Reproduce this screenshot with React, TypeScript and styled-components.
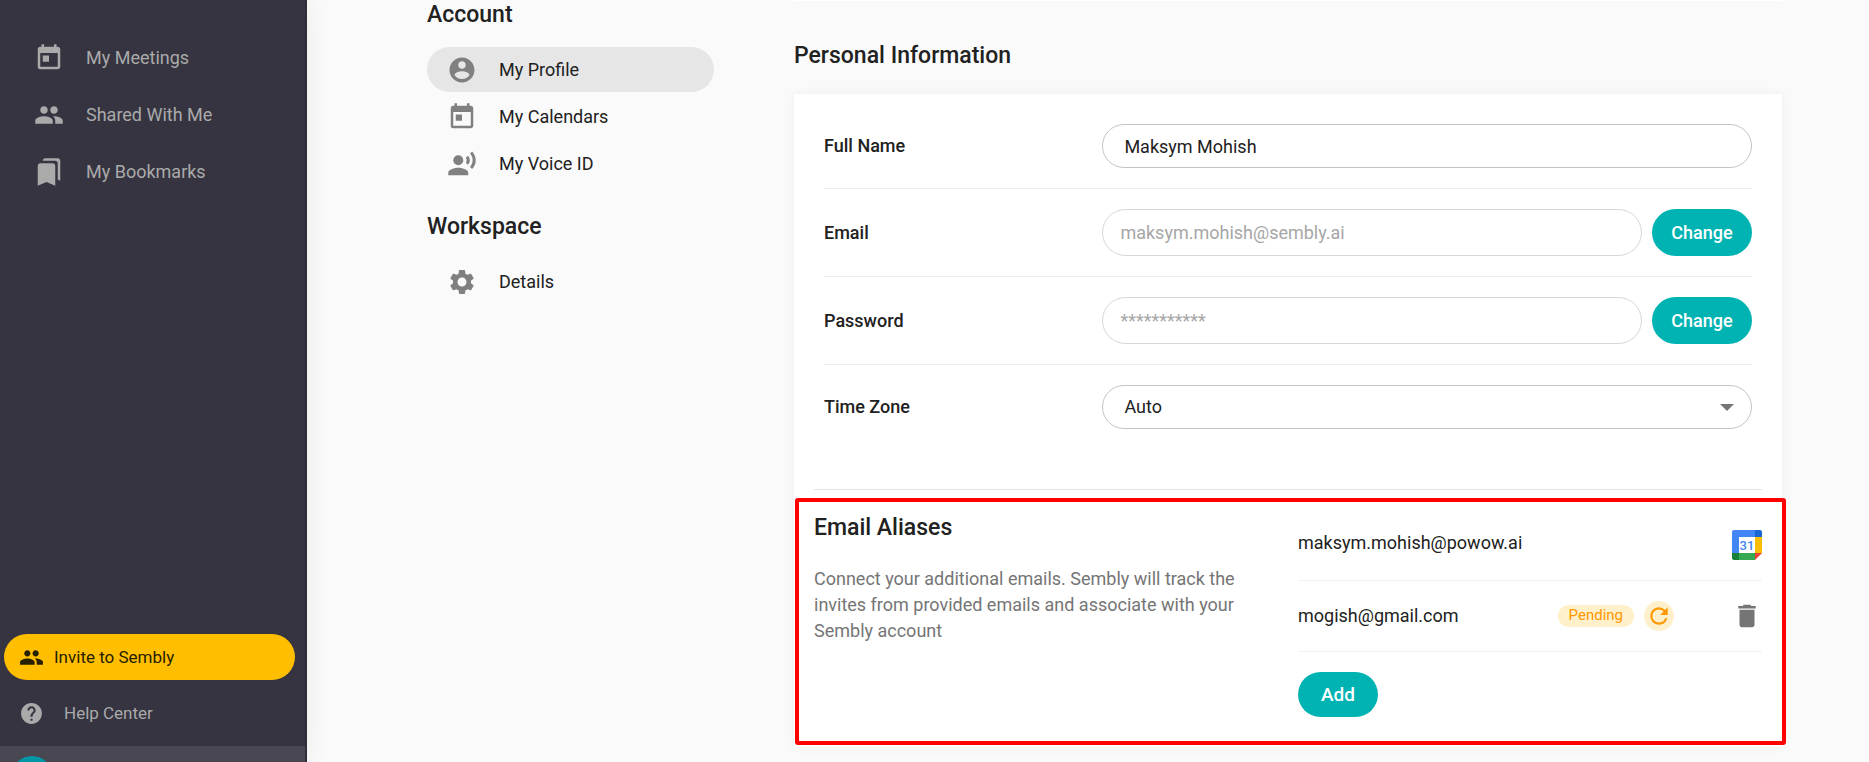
import React from "react";
import styled, { createGlobalStyle, css } from "styled-components";
import {
  MdToday,
  MdPeople,
  MdBookmarks,
  MdRecordVoiceOver,
  MdSettings,
  MdHelp,
  MdRefresh,
  MdDelete,
} from "react-icons/md";

const GlobalStyle = createGlobalStyle`
  *, *::before, *::after { box-sizing: border-box; }
  body {
    margin: 0;
    background: #fafafa;
    color: #212121;
    font-family: Roboto, "Liberation Sans", sans-serif;
    font-size: 18px;
    line-height: 26px;
  }
  h2, p, ul { margin: 0; padding: 0; }
  ul { list-style: none; }
  button, input, select { font: inherit; }
`;

const Page = styled.div`
  display: flex;
  height: 100vh;
  overflow: hidden;
`;

const Sidebar = styled.nav`
  flex: none;
  width: 307px;
  display: flex;
  flex-direction: column;
  background: #353440;
  border-right: 2px solid #2e2d38;
  box-shadow: 0 0 24px rgba(0, 0, 0, 0.07);
`;

const SidebarList = styled.ul`
  flex: 1;
  padding-top: 29px;
`;

const SidebarLink = styled.a`
  display: flex;
  align-items: center;
  gap: 22px;
  height: 57px;
  padding-left: 34px;
  color: #aaaaaa;
  text-decoration: none;
  svg { flex: none; width: 30px; height: 30px; }
`;

const InviteButton = styled.button`
  display: flex;
  align-items: center;
  gap: 10px;
  height: 46px;
  margin: 0 10px 0 4px;
  padding: 0 15px;
  border: 0;
  border-radius: 23px;
  background: #ffbf00;
  color: #262000;
  font-size: 17px;
  svg { width: 25px; height: 25px; }
`;

const HelpLink = styled.a`
  display: flex;
  align-items: center;
  gap: 20px;
  height: 66px;
  padding-left: 19px;
  color: #aaaaaa;
  font-size: 17px;
  text-decoration: none;
  svg { width: 25px; height: 25px; }
`;

const UserBar = styled.div`
  height: 16px;
  padding: 10px 12px 0;
  overflow: hidden;
  background: #494852;
`;

const Avatar = styled.div`
  width: 40px;
  height: 40px;
  border-radius: 50%;
  background: #0097a7;
`;

const Main = styled.div`
  flex: 1;
  min-width: 0;
  display: flex;
  gap: 80px;
  padding: 0 87px 0 120px;
`;

const SettingsNav = styled.nav`
  flex: none;
  width: 287px;
`;

const Heading = styled.h2`
  font-size: 23px;
  font-weight: 500;
  line-height: 30px;
`;

const SettingsList = styled.ul`
  display: flex;
  flex-direction: column;
  gap: 2px;
  padding: 17px 0 26px;
`;

const SettingsLink = styled.a<{ $active?: boolean }>`
  display: flex;
  align-items: center;
  gap: 22px;
  height: 45px;
  padding-left: 20px;
  border-radius: 23px;
  background: ${(p) => (p.$active ? "#e6e6e6" : "transparent")};
  color: #212121;
  text-decoration: none;
  svg { flex: none; width: 30px; height: 30px; color: #808080; }
`;

const Content = styled.main`
  flex: 1;
  min-width: 0;
`;

const cardSurface = css`
  background: #ffffff;
  box-shadow: 0 0 10px rgba(0, 0, 0, 0.06);
`;

const CardTail = styled.div`
  ${cardSurface}
  height: 1px;
  margin-bottom: 40px;
`;

const Card = styled.section`
  ${cardSurface}
  margin-top: 23px;
  padding-bottom: 2px;
`;

const Form = styled.form`
  padding: 10px 30px 40px;
`;

const Row = styled.div`
  display: grid;
  grid-template-columns: 3fr 7fr;
  align-items: center;
  padding: 20px 0;
  & + & { border-top: 1px solid #ececec; }
`;

const RowLabel = styled.label`
  font-weight: 500;
`;

const Field = styled.div`
  position: relative;
  display: flex;
  gap: 10px;
`;

const fieldBox = css`
  flex: 1;
  min-width: 0;
  height: 44px;
  padding: 0 21px;
  border: 1px solid #c4c4c4;
  border-radius: 24px;
  outline: 0;
  background: #ffffff;
  color: #212121;
`;

const TextInput = styled.input`
  ${fieldBox}
  &:disabled {
    height: 47px;
    padding: 0 17px;
    border-color: #d6d6d6;
    color: #a6a6a6;
  }
`;

const Select = styled.select`
  ${fieldBox}
  appearance: none;
`;

const SelectArrow = styled.svg`
  position: absolute;
  top: 19px;
  right: 18px;
  width: 14px;
  height: 7px;
  fill: #757575;
  pointer-events: none;
`;

const PrimaryButton = styled.button<{ $wide?: boolean }>`
  flex: none;
  width: ${(p) => (p.$wide ? "100px" : "80px")};
  height: ${(p) => (p.$wide ? "47px" : "45px")};
  padding: 0;
  border: 0;
  border-radius: 24px;
  background: #00b3b3;
  color: #ffffff;
  font-size: ${(p) => (p.$wide ? "18px" : "19px")};
  font-weight: 500;
`;

const Divider = styled.hr`
  margin: 0 20px 8px;
  border: 0;
  border-top: 1px solid #e4e4e4;
`;

const Aliases = styled.section`
  display: grid;
  grid-template-columns: 484px 1fr;
  min-height: 247px;
  margin: 0 -4px 0 1px;
  padding: 11px 20px 24px 15px;
  border: 4px solid #ff0000;
  border-radius: 3px;
`;

const AliasesIntro = styled.div`
  padding-right: 50px;
  p { margin-top: 23px; color: #757575; }
`;

const AliasRow = styled.li<{ $first?: boolean }>`
  display: flex;
  align-items: ${(p) => (p.$first ? "flex-start" : "center")};
  height: ${(p) => (p.$first ? "68px" : "71px")};
  padding-top: ${(p) => (p.$first ? "17px" : "0")};
  border-bottom: 1px solid #f2f2f2;
`;

const AliasEmail = styled.span`
  flex: 1;
`;

const Pending = styled.span`
  height: 22px;
  padding: 0 11px;
  border-radius: 11px;
  background: #fff0cc;
  color: #ff9800;
  font-size: 15px;
  line-height: 20px;
`;

const ResendButton = styled.button`
  display: flex;
  align-items: center;
  justify-content: center;
  width: 30px;
  height: 30px;
  margin: 0 58px 0 10px;
  padding: 0;
  border: 0;
  border-radius: 50%;
  background: #fff0cc;
  color: #ff9800;
  svg { width: 26px; height: 26px; }
`;

const DeleteButton = styled.button`
  display: flex;
  padding: 0;
  border: 0;
  background: none;
  color: #757575;
  svg { width: 30px; height: 30px; }
`;

const AddWrap = styled.div`
  padding-top: 20px;
`;

const AccountCircle = () => (
  <svg viewBox="0 0 24 24" fill="currentColor" aria-hidden="true">
    <path d="M12 2C6.48 2 2 6.48 2 12s4.48 10 10 10 10-4.48 10-10S17.52 2 12 2zm0 3c1.66 0 3 1.34 3 3s-1.34 3-3 3-3-1.34-3-3 1.34-3 3-3zm0 14.2c-2.5 0-4.71-1.28-6-3.22.03-1.99 4-3.08 6-3.08 1.99 0 5.97 1.09 6 3.08-1.29 1.94-3.5 3.22-6 3.22z" />
  </svg>
);

const GoogleCalendarLogo = () => (
  <svg width="30" height="30" viewBox="0 0 30 30" role="img" aria-label="Google Calendar">
    <path d="M2 0H23V7H7V23H0V2A2 2 0 0 1 2 0Z" fill="#4285f4" />
    <path d="M23 0H28A2 2 0 0 1 30 2V7H23Z" fill="#1967d2" />
    <path d="M23 7H30V23H23Z" fill="#fbbc04" />
    <path d="M7 23H23V30H7Z" fill="#34a853" />
    <path d="M0 23H7V30H2A2 2 0 0 1 0 28Z" fill="#188038" />
    <path d="M23 23H30L23 30Z" fill="#ea4335" />
    <path d="M7 7H23V23H7Z" fill="#ffffff" />
    <text x="15" y="20" textAnchor="middle" fontFamily="Roboto, sans-serif" fontSize="13" fontWeight="500" fill="#4285f4">31</text>
  </svg>
);

const sidebarItems = [
  { label: "My Meetings", Icon: MdToday },
  { label: "Shared With Me", Icon: MdPeople },
  { label: "My Bookmarks", Icon: MdBookmarks },
];

const accountItems = [
  { label: "My Profile", Icon: AccountCircle, active: true },
  { label: "My Calendars", Icon: MdToday },
  { label: "My Voice ID", Icon: MdRecordVoiceOver },
];

export default function App() {
  return (
    <>
      <GlobalStyle />
      <Page>
        <Sidebar aria-label="Main">
          <SidebarList>
            {sidebarItems.map(({ label, Icon }) => (
              <li key={label}>
                <SidebarLink href="#"><Icon />{label}</SidebarLink>
              </li>
            ))}
          </SidebarList>
          <InviteButton type="button"><MdPeople />Invite to Sembly</InviteButton>
          <HelpLink href="#"><MdHelp />Help Center</HelpLink>
          <UserBar><Avatar /></UserBar>
        </Sidebar>
        <Main>
          <SettingsNav aria-label="Settings">
            <Heading>Account</Heading>
            <SettingsList>
              {accountItems.map(({ label, Icon, active }) => (
                <li key={label}>
                  <SettingsLink href="#" $active={active}><Icon />{label}</SettingsLink>
                </li>
              ))}
            </SettingsList>
            <Heading>Workspace</Heading>
            <SettingsList>
              <li>
                <SettingsLink href="#"><MdSettings />Details</SettingsLink>
              </li>
            </SettingsList>
          </SettingsNav>
          <Content>
            <CardTail />
            <Heading>Personal Information</Heading>
            <Card>
              <Form>
                <Row>
                  <RowLabel htmlFor="name">Full Name</RowLabel>
                  <Field><TextInput id="name" defaultValue="Maksym Mohish" /></Field>
                </Row>
                <Row>
                  <RowLabel htmlFor="email">Email</RowLabel>
                  <Field>
                    <TextInput id="email" disabled defaultValue="maksym.mohish@sembly.ai" />
                    <PrimaryButton type="button" $wide>Change</PrimaryButton>
                  </Field>
                </Row>
                <Row>
                  <RowLabel htmlFor="password">Password</RowLabel>
                  <Field>
                    <TextInput id="password" disabled defaultValue="***********" />
                    <PrimaryButton type="button" $wide>Change</PrimaryButton>
                  </Field>
                </Row>
                <Row>
                  <RowLabel htmlFor="zone">Time Zone</RowLabel>
                  <Field>
                    <Select id="zone"><option>Auto</option></Select>
                    <SelectArrow viewBox="0 0 14 7" aria-hidden="true"><path d="M0 0H14L7 7Z" /></SelectArrow>
                  </Field>
                </Row>
              </Form>
              <Divider />
              <Aliases>
                <AliasesIntro>
                  <Heading>Email Aliases</Heading>
                  <p>
                    Connect your additional emails. Sembly will track the invites from provided
                    emails and associate with your Sembly account
                  </p>
                </AliasesIntro>
                <div>
                  <ul>
                    <AliasRow $first>
                      <AliasEmail>maksym.mohish@powow.ai</AliasEmail>
                      <GoogleCalendarLogo />
                    </AliasRow>
                    <AliasRow>
                      <AliasEmail>mogish@gmail.com</AliasEmail>
                      <Pending>Pending</Pending>
                      <ResendButton type="button" aria-label="Resend invitation"><MdRefresh /></ResendButton>
                      <DeleteButton type="button" aria-label="Delete alias"><MdDelete /></DeleteButton>
                    </AliasRow>
                  </ul>
                  <AddWrap><PrimaryButton type="button">Add</PrimaryButton></AddWrap>
                </div>
              </Aliases>
            </Card>
          </Content>
        </Main>
      </Page>
    </>
  );
}
